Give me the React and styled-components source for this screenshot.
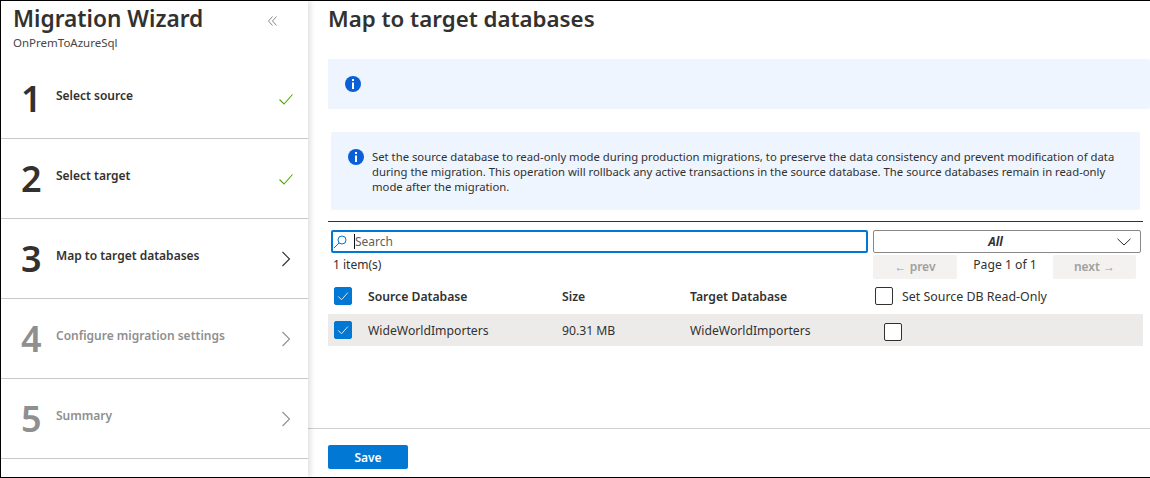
import React from "react";
import styled, { createGlobalStyle } from "styled-components";

const GlobalStyle = createGlobalStyle`
  html, body {
    margin: 0;
    padding: 0;
    background: #fff;
  }

  * {
    box-sizing: border-box;
  }
`;

const steps = [
  { id: 1, label: "Select source", state: "done" },
  { id: 2, label: "Select target", state: "done" },
  { id: 3, label: "Map to target databases", state: "active" },
  { id: 4, label: "Configure migration settings", state: "disabled" },
  { id: 5, label: "Summary", state: "disabled" },
];

const InfoIcon = () => (
  <InfoSvg viewBox="0 0 16 16">
    <circle cx="8" cy="8" r="8" fill="#0a5ed7" />
    <rect x="7" y="3" width="2" height="2" fill="#fff" />
    <rect x="7" y="6.5" width="2" height="6.5" fill="#fff" />
  </InfoSvg>
);

const Check = ({ color = "#fff" }) => (
  <svg width="16" height="16" viewBox="0 0 16 16" fill="none">
    <path d="M1.5 8.5 L6 13 L14.5 3.5" stroke={color} strokeWidth="1.1" />
  </svg>
);

const Chevron = ({ color }) => (
  <svg width="10" height="16" viewBox="0 0 10 16" fill="none">
    <path d="M1.5 1 L8.5 8 L1.5 15" stroke={color} strokeWidth="1.1" />
  </svg>
);

const App = () => {
  return (
    <Frame>
      <GlobalStyle />
      <Sidebar>
        <SideHeader>
          <div>
            <WizardTitle>Migration Wizard</WizardTitle>
            <WizardSub>OnPremToAzureSql</WizardSub>
          </div>
          <Collapse width="9" height="10" viewBox="0 0 9 10" fill="none">
            <path d="M4.5 .5 L.5 5 L4.5 9.500 M8.500 .5 L4.5 5 L8.500 9.500" stroke="#7a7a7a" strokeWidth="0.9" />
          </Collapse>
        </SideHeader>
        {steps.map((step) => (
          <Step key={step.id} $disabled={step.state === "disabled"}>
            <StepNumber>{step.id}</StepNumber>
            <StepLabel>{step.label}</StepLabel>
            <StepIcon>
              {step.state === "done" ? (
                <Check color="#57a300" />
              ) : (
                <Chevron color={step.state === "active" ? "#323130" : "#8f8f8f"} />
              )}
            </StepIcon>
          </Step>
        ))}
      </Sidebar>
      <Main>
        <Content>
          <PageTitle>Map to target databases</PageTitle>
          <EmptyBanner>
            <InfoIcon />
          </EmptyBanner>
          <Notice>
            <InfoIcon />
            <NoticeText>
              Set the source database to read-only mode during production migrations, to preserve the data
              consistency and prevent modification of data during the migration. This operation will rollback
              any active transactions in the source database. The source databases remain in read-only mode
              after the migration.
            </NoticeText>
          </Notice>
          <Divider />
          <Filters>
            <SearchBox>
              <svg width="14" height="14" viewBox="0 0 14 14" fill="none">
                <circle cx="9" cy="5" r="4" stroke="#0078d4" strokeWidth="1" />
                <path d="M6.100 7.900 L1 13" stroke="#0078d4" strokeWidth="1" />
              </svg>
              <Caret />
              <SearchText>Search</SearchText>
            </SearchBox>
            <Dropdown>
              <DropdownValue>All</DropdownValue>
              <svg width="14" height="8" viewBox="0 0 14 8" fill="none">
                <path d="M.5 .8 L7 7 L13.500 .8" stroke="#323130" strokeWidth="1" />
              </svg>
            </Dropdown>
          </Filters>
          <PagerRow>
            <ItemCount>1 item(s)</ItemCount>
            <Pager>
              <PageButton>← prev</PageButton>
              <PageInfo>Page 1 of 1</PageInfo>
              <PageButton $next>next →</PageButton>
            </Pager>
          </PagerRow>
          <TableRow $head>
            <Box $checked><Check /></Box>
            <SourceCell $head>Source Database</SourceCell>
            <SizeCell $head>Size</SizeCell>
            <TargetCell $head>Target Database</TargetCell>
            <Box />
            <ReadOnlyLabel>Set Source DB Read-Only</ReadOnlyLabel>
          </TableRow>
          <TableRow>
            <Box $checked><Check /></Box>
            <SourceCell>WideWorldImporters</SourceCell>
            <SizeCell>90.31 MB</SizeCell>
            <TargetCell>WideWorldImporters</TargetCell>
            <RowBox />
          </TableRow>
        </Content>
        <Footer>
          <SaveButton>Save</SaveButton>
        </Footer>
      </Main>
    </Frame>
  );
};

const Frame = styled.div`
  display: flex;
  width: 1150px;
  height: 478px;
  overflow: hidden;
  border-top: 1px solid #000;
  border-bottom: 1px solid #000;
  border-left: 1px solid #000;
  background: #fff;
  color: #323130;
  font-family: "Noto Sans", "Open Sans", sans-serif;
`;

const Sidebar = styled.aside`
  flex: 0 0 307px;
  box-shadow: 2px 0 6px rgba(0, 0, 0, 0.14);
  z-index: 1;
`;

const SideHeader = styled.header`
  display: flex;
  justify-content: space-between;
  height: 58px;
  padding: 2px 31px 0 12px;
`;

const WizardTitle = styled.h1`
  margin: 0;
  font-size: 22.7px;
  font-weight: 600;
  line-height: 32px;
  white-space: nowrap;
`;

const WizardSub = styled.div`
  color: #484644;
  font-size: 11.5px;
  line-height: 16px;
`;

const Collapse = styled.svg`
  margin-top: 13px;
`;

const Step = styled.div`
  display: flex;
  height: 80px;
  padding: 21px 14px 0 20px;
  border-bottom: 1px solid #c8c8c8;
  color: ${({ $disabled }) => ($disabled ? "#8f8f8f" : "#323130")};
`;

const StepNumber = styled.div`
  flex: 0 0 35px;
  font-size: 36px;
  font-weight: 600;
  line-height: 38px;
`;

const StepLabel = styled.div`
  flex: 1;
  padding-top: 7px;
  font-size: 12px;
  font-weight: 600;
  line-height: 18px;
  white-space: nowrap;
`;

const StepIcon = styled.div`
  display: flex;
  align-items: center;
  justify-content: center;
  width: 16px;
  height: 16px;
  margin-top: 11px;
`;

const Main = styled.main`
  display: flex;
  flex: 1;
  flex-direction: column;
  min-width: 0;
`;

const Content = styled.div`
  flex: 1;
  padding-left: 20px;
`;

const PageTitle = styled.h2`
  height: 58px;
  margin: 0;
  padding-top: 2px;
  font-size: 22.3px;
  font-weight: 600;
  line-height: 32px;
  white-space: nowrap;
`;

const EmptyBanner = styled.div`
  display: flex;
  align-items: center;
  height: 50px;
  padding-left: 17px;
  border-radius: 2px;
  background: #eef5fe;
`;

const InfoSvg = styled.svg`
  flex: 0 0 16px;
  width: 16px;
  height: 16px;
`;

const Notice = styled.div`
  display: flex;
  gap: 8px;
  width: 809px;
  height: 78px;
  margin: 23px 0 0 3px;
  padding: 17px 14px 0 17px;
  border-radius: 2px;
  background: #eef5fe;
`;

const NoticeText = styled.p`
  margin: 0;
  font-size: 11.3px;
  line-height: 15px;
`;

const Divider = styled.hr`
  width: 815px;
  height: 1px;
  margin: 11px 0 0;
  border: 0;
  background: #323130;
`;

const Filters = styled.div`
  display: flex;
  gap: 5px;
  margin: 8px 0 0 3px;
`;

const SearchBox = styled.div`
  display: flex;
  align-items: center;
  width: 537px;
  height: 23px;
  border: 2px solid #0078d4;
  border-radius: 2px;
`;

const Caret = styled.span`
  width: 1px;
  height: 15px;
  margin-left: 7px;
  background: #111;
`;

const SearchText = styled.span`
  color: #605e5c;
  font-size: 12px;
`;

const Dropdown = styled.div`
  display: flex;
  align-items: center;
  width: 268px;
  height: 23px;
  padding-right: 9px;
  border: 1px solid #8a8886;
  border-radius: 2px;
`;

const DropdownValue = styled.span`
  flex: 1;
  font-size: 12px;
  font-style: italic;
  font-weight: 700;
  text-align: center;
`;

const PagerRow = styled.div`
  display: flex;
  justify-content: space-between;
  width: 815px;
  height: 28px;
  padding: 2px 7px 0 5px;
`;

const ItemCount = styled.span`
  font-size: 12px;
  line-height: 20px;
`;

const Pager = styled.div`
  display: flex;
  width: 263px;
`;

const PageButton = styled.div`
  flex: ${({ $next }) => ($next ? "0 0 83px" : "0 0 84px")};
  height: 24px;
  border-radius: 2px;
  background: #f3f2f1;
  color: #a19f9d;
  font-size: 12px;
  font-weight: 600;
  line-height: 24px;
  text-align: center;
`;

const PageInfo = styled.span`
  flex: 1;
  font-size: 12.2px;
  line-height: 20px;
  text-align: center;
`;

const TableRow = styled.div`
  display: flex;
  align-items: center;
  width: 815px;
  height: ${({ $head }) => ($head ? "33px" : "32px")};
  padding: ${({ $head }) => ($head ? "0 0 3px 6px" : "0 0 0 6px")};
  background: ${({ $head }) => ($head ? "transparent" : "#edebe9")};
  font-size: 12.2px;
`;

const Box = styled.span`
  display: flex;
  flex: 0 0 18px;
  align-items: center;
  justify-content: center;
  height: 18px;
  border: 1px solid ${({ $checked }) => ($checked ? "#0078d4" : "#323130")};
  border-radius: 2px;
  background: ${({ $checked }) => ($checked ? "#0078d4" : "#fff")};

  svg {
    width: 12px;
    height: 12px;
  }
`;

const RowBox = styled(Box)`
  margin: 4px 0 0 9px;
`;

const SourceCell = styled.span`
  flex: 0 0 194px;
  margin-left: 16px;
  font-weight: ${({ $head }) => ($head ? 600 : 400)};
`;

const SizeCell = styled.span`
  flex: 0 0 128px;
  font-weight: ${({ $head }) => ($head ? 600 : 400)};
`;

const TargetCell = styled.span`
  flex: 0 0 185px;
  font-weight: ${({ $head }) => ($head ? 600 : 400)};
`;

const ReadOnlyLabel = styled.span`
  margin-left: 9px;
  font-size: 12.4px;
`;

const Footer = styled.footer`
  height: 49px;
  padding: 16px 0 0 20px;
  border-top: 1px solid #d2d0ce;
`;

const SaveButton = styled.button`
  display: block;
  width: 80px;
  height: 24px;
  padding: 0;
  border: 0;
  border-radius: 2px;
  background: #0078d4;
  color: #fff;
  font-family: inherit;
  font-size: 12px;
  font-weight: 600;
`;

export default App;
